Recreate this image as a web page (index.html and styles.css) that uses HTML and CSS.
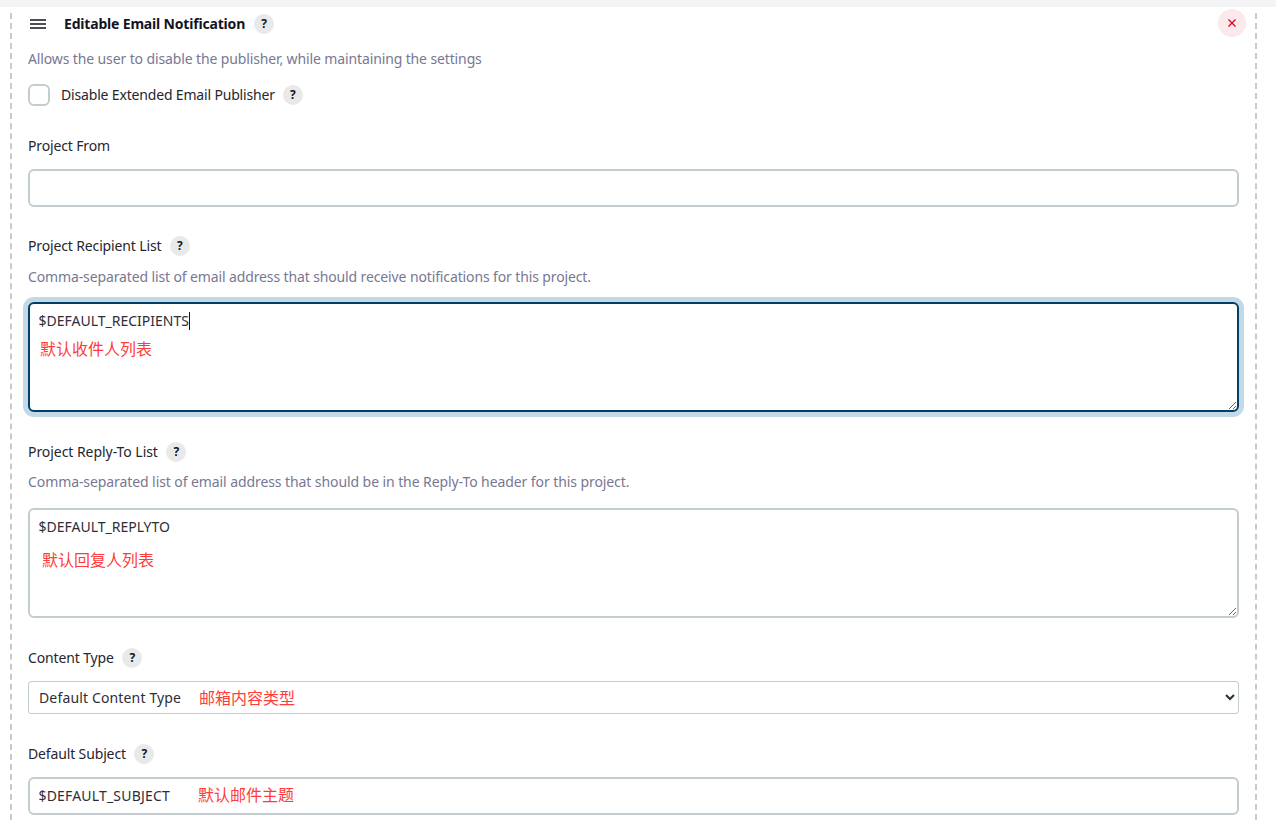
FILE: index.html
```html
<!DOCTYPE html>
<html lang="en">
<head>
<meta charset="utf-8">
<title>Editable Email Notification</title>
<link rel="stylesheet" href="styles.css">
</head>
<body>
<div class="topstrip"></div>
<main class="chunk">
  <div class="head">
    <svg class="handle" viewBox="0 0 16 10" width="16" height="10"><path d="M0 1h16M0 5h16M0 9h16" stroke="#14141f" stroke-width="1.4" fill="none"/></svg>
    <strong class="title">Editable Email Notification</strong>
    <span class="help">?</span>
    <button class="close" type="button" aria-label="Delete">
      <svg viewBox="0 0 8 8" width="8" height="8"><path d="M0.5 0.5l7 7M7.5 0.5l-7 7" stroke="#e6001f" stroke-width="1.3" fill="none"/></svg>
    </button>
  </div>
  <p class="desc top">Allows the user to disable the publisher, while maintaining the settings</p>
  <div class="check">
    <span class="box"></span>
    <span class="check-label">Disable Extended Email Publisher</span>
    <span class="help">?</span>
  </div>

  <section class="field first">
    <div class="label"><span>Project From</span></div>
    <input class="control input" type="text">
  </section>

  <section class="field second">
    <div class="label"><span>Project Recipient List</span><span class="help">?</span></div>
    <p class="desc">Comma-separated list of email address that should receive notifications for this project.</p>
    <div class="overlay-wrap">
      <textarea class="control area focus">$DEFAULT_RECIPIENTS</textarea>
      <span class="caret"></span>
      <span class="note note-recipients">默认收件人列表</span>
    </div>
  </section>

  <section class="field">
    <div class="label"><span class="wide">Project Reply-To List</span><span class="help">?</span></div>
    <p class="desc wide-desc">Comma-separated list of email address that should be in the Reply-To header for this project.</p>
    <div class="overlay-wrap">
      <textarea class="control area">$DEFAULT_REPLYTO</textarea>
      <span class="note note-reply">默认回复人列表</span>
    </div>
  </section>

  <section class="field">
    <div class="label"><span>Content Type</span><span class="help">?</span></div>
    <div class="overlay-wrap">
      <select class="control select"><option>Default Content Type</option></select>
      <span class="note note-type">邮箱内容类型</span>
    </div>
  </section>

  <section class="field">
    <div class="label"><span>Default Subject</span><span class="help">?</span></div>
    <div class="overlay-wrap">
      <input class="control input" type="text" value="$DEFAULT_SUBJECT">
      <span class="note note-subject">默认邮件主题</span>
    </div>
  </section>
</main>
</body>
</html>
```
FILE: styles.css
```css
* { box-sizing: border-box; }
html, body { margin: 0; height: 824px; overflow: hidden; background: #fff; }
body {
  font-family: "Noto Sans", "Noto Sans CJK SC", sans-serif;
  font-size: 14px;
  line-height: 22px;
  letter-spacing: -0.14px;
  color: #26262f;
}
.topstrip { height: 7px; background: #f4f4f6; }
.chunk {
  margin-left: 10px;
  width: 1247px;
  height: 817px;
  padding: 0 16px 0 16px;
  border-left: 2px dashed #c3ccd1;
  border-right: 2px dashed #c3ccd1;
}
.head { display: flex; align-items: center; height: 22px; margin-top: 6px; padding-left: 2px; position: relative; }
.handle { margin-right: 18px; }
.title { font-weight: 700; font-size: 14px; letter-spacing: -0.18px; margin-right: 9px; color: #14141f; }
.help {
  display: inline-flex; align-items: center; justify-content: center;
  width: 20px; height: 20px; border-radius: 50%;
  background: #e9e9e9; font-size: 12px; font-weight: 700; color: #14141f; line-height: 1;
  letter-spacing: 0;
}
.close {
  position: absolute; right: -7px; top: -4px;
  width: 28px; height: 28px; border: 0; padding: 0; border-radius: 50%;
  background: #fbe9eb; display: flex; align-items: center; justify-content: center;
}
p { margin: 0; }
.desc { color: #787892; letter-spacing: -0.125px; }
.desc.wide-desc { letter-spacing: -0.085px; }
.desc.top { margin-top: 13px; }
.check { display: flex; align-items: center; height: 22px; margin-top: 14px; }
.box { width: 22px; height: 22px; border: 2px solid #c3ccd1; border-radius: 6px; margin-right: 11px; }
.check-label { margin-right: 8px; letter-spacing: -0.17px; }
.field { margin-top: 28.8px; }
.field.first { margin-top: 29px; }
.field.second { margin-top: 28px; }
.label { display: flex; align-items: center; gap: 8.5px; height: 22px; margin-bottom: 12px; }
.wide { letter-spacing: -0.05px; }
.label + .desc { margin-top: -3.4px; margin-bottom: 14.4px; }
.overlay-wrap { position: relative; }
.control {
  display: block; width: 100%; margin: 0;
  font: inherit; letter-spacing: 0; color: #2e2e38; background: #fff;
  border: 2px solid #c3ccd1; border-radius: 6px; outline: 0;
}
.input { height: 38px; padding: 0 8.5px; letter-spacing: 0.18px; }
.area { height: 110px; padding: 6px 8.5px; resize: vertical; }
.area.focus { border-color: #023f67; box-shadow: 0 0 0 5px #c2d9e8; }
.select { height: 33.4px; padding: 0 6px; border-width: 1px; border-radius: 3px; letter-spacing: 0.15px; }
.note { position: absolute; color: #ff3b3b; font-size: 16px; line-height: 22px; letter-spacing: 0; font-family: "Noto Sans CJK SC", sans-serif; white-space: nowrap; }
.note-recipients { left: 12px; top: 35px; }
.note-reply { left: 14px; top: 40px; }
.note-type { left: 171px; top: 5px; }
.note-subject { left: 170px; top: 6px; }
.caret { position: absolute; left: 161px; top: 10px; width: 1px; height: 18px; background: #14141f; }
```
